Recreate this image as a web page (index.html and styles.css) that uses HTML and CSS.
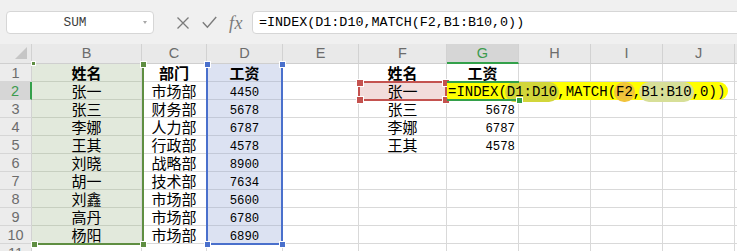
FILE: index.html
```html
<!DOCTYPE html>
<html lang="zh">
<head>
<meta charset="utf-8">
<title>Sheet</title>
<link rel="stylesheet" href="styles.css">
</head>
<body>
<div class="toolbar">
  <div class="namebox"><span class="nb-text">SUM</span><span class="nb-arrow"></span></div>
  <div class="fbtns">
    <svg class="ic" width="14" height="14" viewBox="0 0 14 14"><path d="M1.5 1.5L12.5 12.5M12.5 1.5L1.5 12.5" stroke="#7b7b7b" stroke-width="1.3" fill="none"/></svg>
    <svg class="ic" width="15" height="14" viewBox="0 0 15 14"><path d="M0.8 6.2L5.4 11.3L14.2 1" stroke="#7b7b7b" stroke-width="1.4" fill="none"/></svg>
    <span class="fx">fx</span>
  </div>
  <div class="finput">=INDEX(D1:D10,MATCH(F2,B1:B10,0))</div>
</div>
<div class="sheet">
  <div class="grid">
    <div class="c h corner"><svg width="12" height="12" viewBox="0 0 12 12"><path d="M12 0L12 12L0 12Z" fill="#c6c6c6"/></svg></div>
    <div class="c h">B</div><div class="c h">C</div><div class="c h">D</div><div class="c h">E</div><div class="c h">F</div><div class="c h hsel">G</div><div class="c h">H</div><div class="c h">I</div><div class="c h">J</div><div class="c h last"></div>

    <div class="c rh">1</div><div class="c gr bold">姓名</div><div class="c bold">部门</div><div class="c bl bold">工资</div><div class="c"></div><div class="c bold">姓名</div><div class="c bold">工资</div><div class="c"></div><div class="c"></div><div class="c"></div><div class="c last"></div>

    <div class="c rh rsel">2</div><div class="c gr">张一</div><div class="c">市场部</div><div class="c bl num">4450</div><div class="c"></div><div class="c pk">张一</div><div class="c fcell"><span class="mark">=INDEX(<span class="ref rd">D1:D10</span>,MATCH(<span class="ref rf">F2</span>,<span class="ref rb">B1:B10</span>,0)<span class="endp">)</span></span></div><div class="c"></div><div class="c"></div><div class="c"></div><div class="c last"></div>

    <div class="c rh">3</div><div class="c gr">张三</div><div class="c">财务部</div><div class="c bl num">5678</div><div class="c"></div><div class="c">张三</div><div class="c num rt">5678</div><div class="c"></div><div class="c"></div><div class="c"></div><div class="c last"></div>

    <div class="c rh">4</div><div class="c gr">李娜</div><div class="c">人力部</div><div class="c bl num">6787</div><div class="c"></div><div class="c">李娜</div><div class="c num rt">6787</div><div class="c"></div><div class="c"></div><div class="c"></div><div class="c last"></div>

    <div class="c rh">5</div><div class="c gr">王其</div><div class="c">行政部</div><div class="c bl num">4578</div><div class="c"></div><div class="c">王其</div><div class="c num rt">4578</div><div class="c"></div><div class="c"></div><div class="c"></div><div class="c last"></div>

    <div class="c rh">6</div><div class="c gr">刘晓</div><div class="c">战略部</div><div class="c bl num">8900</div><div class="c"></div><div class="c"></div><div class="c"></div><div class="c"></div><div class="c"></div><div class="c"></div><div class="c last"></div>

    <div class="c rh">7</div><div class="c gr">胡一</div><div class="c">技术部</div><div class="c bl num">7634</div><div class="c"></div><div class="c"></div><div class="c"></div><div class="c"></div><div class="c"></div><div class="c"></div><div class="c last"></div>

    <div class="c rh">8</div><div class="c gr">刘鑫</div><div class="c">市场部</div><div class="c bl num">5600</div><div class="c"></div><div class="c"></div><div class="c"></div><div class="c"></div><div class="c"></div><div class="c"></div><div class="c last"></div>

    <div class="c rh">9</div><div class="c gr">高丹</div><div class="c">市场部</div><div class="c bl num">6780</div><div class="c"></div><div class="c"></div><div class="c"></div><div class="c"></div><div class="c"></div><div class="c"></div><div class="c last"></div>

    <div class="c rh">10</div><div class="c gr">杨阳</div><div class="c">市场部</div><div class="c bl num">6890</div><div class="c"></div><div class="c"></div><div class="c"></div><div class="c"></div><div class="c"></div><div class="c"></div><div class="c last"></div>

    <div class="c rh">11</div><div class="c"></div><div class="c"></div><div class="c"></div><div class="c"></div><div class="c"></div><div class="c"></div><div class="c"></div><div class="c"></div><div class="c"></div><div class="c last"></div>
  </div>

  <div class="range range-b">
    <span class="hd hd-tl small"></span><span class="hd hd-tr"></span><span class="hd hd-bl"></span><span class="hd hd-br"></span>
  </div>
  <div class="range range-d">
    <span class="hd hd-tl"></span><span class="hd hd-tr"></span><span class="hd hd-bl"></span><span class="hd hd-br"></span>
  </div>
  <div class="range range-f">
    <span class="hd hd-tl"></span><span class="hd hd-tr"></span><span class="hd hd-bl"></span><span class="hd hd-br"></span>
  </div>
  <div class="active"><span class="fillh"></span></div>
</div>
</body>
</html>
```

FILE: styles.css
```css
* {
  box-sizing: border-box;
  margin: 0;
  padding: 0;
}

body {
  width: 737px;
  height: 251px;
  overflow: hidden;
  background: #ffffff;
  font-family: "Noto Sans CJK SC", sans-serif;
}

/* ---------- formula bar ---------- */
.toolbar {
  height: 44px;
  background: #f0f0f0;
  display: flex;
  align-items: flex-start;
  padding: 11px 0 0 6px;
}

.namebox {
  width: 148px;
  height: 23px;
  background: #ffffff;
  border: 1px solid #d6d6d6;
  border-radius: 4px;
  display: flex;
  align-items: center;
  padding-right: 4px;
}

.nb-text {
  flex: 1;
  text-align: center;
  font-family: "Liberation Mono", monospace;
  font-size: 12.8px;
  color: #3c3c3c;
}

.nb-arrow {
  width: 0;
  height: 0;
  border-left: 2.5px solid transparent;
  border-right: 2.5px solid transparent;
  border-top: 3px solid #a8a8a8;
  margin-right: 2px;
}

.fbtns {
  display: flex;
  align-items: center;
  height: 23px;
  margin-left: 22px;
  gap: 12px;
}

.ic {
  display: block;
}

.fx {
  font-family: "Liberation Serif", serif;
  font-style: italic;
  font-size: 18px;
  line-height: 20px;
  color: #7b7b7b;
  letter-spacing: 0.5px;
}

.finput {
  flex: 1;
  height: 23px;
  margin-left: 9px;
  margin-right: -10px;
  background: #ffffff;
  border: 1px solid #d6d6d6;
  border-radius: 4px;
  padding-left: 6px;
  font-family: "Liberation Mono", monospace;
  font-size: 13.4px;
  line-height: 21px;
  color: #000000;
  white-space: nowrap;
}

/* ---------- sheet grid ---------- */
.sheet {
  position: relative;
}

.grid {
  display: grid;
  grid-template-columns: 32px 110px 65px 76px 76px 88px 72px 72px 72px 72px 1fr;
  grid-template-rows: 20px repeat(11, 18px);
}

.c {
  display: flex;
  align-items: center;
  justify-content: center;
  border-right: 1px solid #d9d9d9;
  border-bottom: 1px solid #d9d9d9;
  font-size: 15px;
  line-height: 16px;
  white-space: nowrap;
  color: #000000;
}

.c.last {
  border-right: none;
}

.h {
  background: #e9e9e9;
  border-right-color: #d2d2d2;
  border-bottom-color: #cfcfcf;
  color: #6c6c6c;
  font-family: "Liberation Sans", sans-serif;
  font-size: 14.5px;
  line-height: 17px;
}

.corner {
  align-items: flex-end;
  justify-content: flex-end;
  padding: 0 4px 4px 0;
}

.corner svg {
  display: block;
}

.hsel {
  background: #d6d6d6;
  color: #3c9b4e;
  border-bottom: 2px solid #33a04a;
}

.rh {
  background: #ececec;
  border-right-color: #d2d2d2;
  border-bottom-color: #d6d6d6;
  color: #6c6c6c;
  font-family: "Liberation Sans", sans-serif;
  font-size: 14.5px;
  overflow: hidden;
}

.rsel {
  background: #d6d6d6;
  color: #3c9b4e;
  border-right: 2px solid #33a04a;
}

.bold {
  font-weight: 700;
}

.gr {
  background: #e2e9dc;
  border-bottom-color: #c7cfc0;
}

.bl {
  background: #dce2f2;
  border-bottom-color: #c3c9d8;
}

.pk {
  background: #f2dcdb;
}

.num {
  font-family: "Liberation Mono", monospace;
  font-size: 12.3px;
  padding-top: 4px;
}

.rt {
  justify-content: flex-end;
  padding-right: 3px;
}

/* formula overflowing from G2 */
.fcell {
  justify-content: flex-start;
  align-items: flex-start;
  z-index: 3;
}

.mark {
  display: block;
  flex: none;
  height: 18px;
  padding: 0 3px 0 1px;
  background: #ffff00;
  border-radius: 1px 9px 9px 3px;
  font-family: "Liberation Mono", monospace;
  font-size: 14px;
  line-height: 20px;
  color: #000000;
}

.ref {
  border-radius: 8px;
}

.rd {
  background: #d2d63a;
  box-shadow: 0 0 0 2px #d2d63a;
}

.rf {
  background: #f1c33c;
  box-shadow: 0 0 0 2px #f1c33c;
}

.rb {
  background: #d7df98;
  box-shadow: 0 0 0 2px #d7df98;
}

.endp {
  color: #1f2a6a;
}

/* ---------- selection overlays ---------- */
.range {
  position: absolute;
  top: 20px;
  height: 181px;
  pointer-events: none;
}

.range-b {
  left: 32px;
  width: 112px;
  border-right: 2px solid #5f8e42;
  border-bottom: 2px solid #5f8e42;
}

.range-d {
  left: 206px;
  width: 77px;
  border-left: 2px solid #4a70cc;
  border-right: 2px solid #4a70cc;
  border-bottom: 2px solid #4a70cc;
}

.range-f {
  left: 358px;
  top: 37px;
  width: 89px;
  height: 20px;
  border: 2px solid #c4524f;
}

.hd {
  position: absolute;
  width: 5px;
  height: 5px;
  box-shadow: 0 0 0 1px #ffffff;
}

.range-b .hd { background: #5f8e42; }
.range-d .hd { background: #4a70cc; }
.range-f .hd { background: #c4524f; width: 6px; height: 6px; }

.hd-tl { left: -3px; top: -2px; }
.hd-tr { right: -4px; top: -2px; }
.hd-bl { left: -3px; bottom: -4px; }
.hd-br { right: -4px; bottom: -4px; }

.range-b .hd-tl, .range-b .hd-bl { left: 0; }
.hd.small { width: 3px; height: 3px; }

.range-f .hd-tl { left: -3px; top: -3px; }
.range-f .hd-tr { right: -4px; top: -3px; }
.range-f .hd-bl { left: -3px; bottom: -4px; }
.range-f .hd-br { right: -4px; bottom: -4px; }

.active {
  position: absolute;
  left: 447px;
  top: 37px;
  width: 72px;
  height: 20px;
  border-top: 2px solid #33a04a;
  border-bottom: 2px solid #33a04a;
  z-index: 4;
}

.fillh {
  position: absolute;
  right: -3px;
  bottom: -4px;
  width: 5px;
  height: 5px;
  background: #33a04a;
  box-shadow: 0 0 0 1px #ffffff;
}
```
